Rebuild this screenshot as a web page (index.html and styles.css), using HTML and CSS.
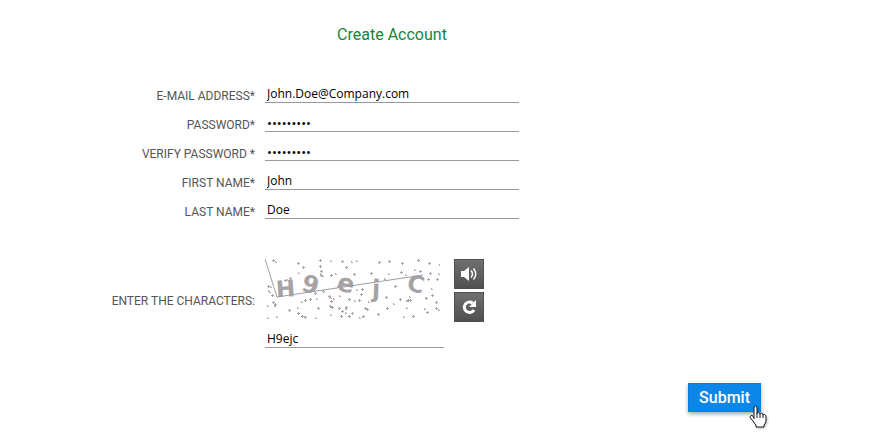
FILE: index.html
```html
<!DOCTYPE html>
<html lang="en">
<head>
<meta charset="utf-8">
<meta name="viewport" content="width=device-width, initial-scale=1">
<title>Create Account</title>
<link rel="stylesheet" href="styles.css">
</head>
<body>
<form class="account">
  <h1 class="title">Create Account</h1>
  <div class="fields">
    <div class="row"><label for="email">E-MAIL ADDRESS*</label><input id="email" type="text" value="John.Doe@Company.com"></div>
    <div class="row"><label for="pass">PASSWORD*</label><input id="pass" type="password" value="secret123"></div>
    <div class="row"><label for="verify">VERIFY PASSWORD *</label><input id="verify" type="password" value="secret123"></div>
    <div class="row"><label for="first">FIRST NAME*</label><input id="first" type="text" value="John"></div>
    <div class="row"><label for="last">LAST NAME*</label><input id="last" type="text" value="Doe"></div>
  </div>
  <div class="row captcha-row">
    <label for="chars">ENTER THE CHARACTERS:</label>
    <div class="captcha">
      <div class="challenge">
        <svg class="puzzle" width="175" height="60" viewBox="0 0 175 60" role="img" aria-label="Captcha">
          <defs>
            <marker id="speck" markerUnits="userSpaceOnUse" markerWidth="6" markerHeight="6" refX="2" refY="2">
              <path d="M1 2h3v1h-3zM2 1h1v3h-1z" fill="#aca6ac"/>
            </marker>
            <marker id="dot" markerUnits="userSpaceOnUse" markerWidth="6" markerHeight="6" refX="2" refY="2">
              <path d="M2 2h1v1h1v1h-2z" fill="#bda9bd"/>
            </marker>
          </defs>
          <path class="specks" d="M8 1L33 4L38 8L20 21L25 19L55 1L55 7L56 12L56 16L66 16L77 2L81 8L3 27L7 36L8 43L10 45L24 51L40 41L45 40L33 54L37 57L40 58L53 49L58 32L64 37L65 47L67 48L73 27L74 49L77 52L76 57L84 40L84 57L114 3L124 2L137 4L153 1L164 4L106 14L89 15L136 13L155 12L165 14L163 20L172 20L130 27L97 30L96 35L94 41L121 38L122 49L135 40L145 41L143 41L161 39L167 36L171 43L171 49L162 53L148 57L113 55L100 49L102 50L87 54L98 57L66 42L81 48L50 34"/>
          <path class="dots" d="M10 2L33 13L65 1L70 14L3 31L5 27L2 46L2 58L11 57L36 42L32 48L50 58L51 39L65 55L68 39L74 36L80 49L119 19L123 14L140 15L149 10L173 14L174 5L166 29L91 30L89 41L128 44L144 37L173 50L159 49L138 57L141 48L94 58L103 42L91 1L86 2L49 28L39 57L57 16L55 14L22 20L9 46L4 32L65 38L80 53L97 57L160 38L141 41"/>
          <g class="letters">
            <text x="11" y="38" font-size="23" transform="rotate(-4 20 30)">H</text>
            <text x="37" y="34" font-size="24" transform="rotate(14 46 27)">9</text>
            <text x="72" y="33" font-size="25" transform="rotate(12 81 27)">e</text>
            <text x="107" y="38" font-size="24" transform="rotate(2 111 34)">j</text>
            <text x="142" y="33" font-size="23" transform="rotate(12 150 27)">C</text>
          </g>
          <path d="M0 0L12 38L158 16" fill="none" stroke="#a39da3"/>
        </svg>
        <div class="tools">
          <button class="tool" type="button" aria-label="Play audio">
            <svg width="20" height="16" viewBox="0 0 20 16"><path d="M2 5h3l5-4v14l-5-4H2z" fill="#fff"/><path d="M12 4.500q3 3.500 0 7M14.500 2.500q4.500 5.500 0 11" fill="none" stroke="#fff" stroke-width="1.500"/></svg>
          </button>
          <button class="tool" type="button" aria-label="New characters">
            <svg width="16" height="16" viewBox="0 0 16 16"><path d="M13 11A5.200 5.200 0 1 1 11.800 4.200" fill="none" stroke="#fff" stroke-width="3"/><path d="M15 1v7H8z" fill="#fff"/></svg>
          </button>
        </div>
      </div>
      <input id="chars" type="text" value="H9ejc">
    </div>
  </div>
  <div class="actions">
    <button class="submit" type="submit">Submit</button>
    <svg class="pointer" width="20" height="25" viewBox="0 0 20 25" aria-hidden="true"><path d="M5 14V3Q5 1 6.500 1T8 3V9Q8 7.500 9.500 7.500T11 9.500Q11 8 12.500 8T14 10.500Q14 9 15.500 9.500T17 12V16Q17 18 15 20V22H7V20Q5 18 4 16L1.500 13Q.5 11.500 2 10.500T5 13" fill="#fff" stroke="#111827"/><path d="M8 9v4M11 9.500V13M14 10.500V13" stroke="#111827"/></svg>
  </div>
</form>
</body>
</html>
```
FILE: styles.css
```css
* {
  box-sizing: border-box;
}

body {
  margin: 0;
  background: #fff;
  color: #555;
  font: 12px/16px Roboto, sans-serif;
}

.account {
  padding: 25px 111px 24px 0;
}

.title {
  width: 254px;
  margin: 0 0 38px 265px;
  color: #1b8239;
  font-size: 16px;
  font-weight: 400;
  line-height: 20px;
  text-align: center;
}

.fields {
  display: grid;
  gap: 9px;
}

.row {
  display: grid;
  grid-template-columns: 255px 254px;
  column-gap: 10px;
  align-items: center;
}

label {
  text-align: right;
  white-space: nowrap;
}

.fields label {
  padding-top: 6px;
  line-height: 14px;
}

input {
  width: 100%;
  height: 20px;
  padding: 2px 2px 0;
  border: 0;
  border-bottom: 1px solid #999;
  background: transparent;
  color: #000;
  font: 12px/16px "Open Sans", sans-serif;
  outline: 0;
}

input[type="password"] {
  font-size: 13px;
}

.captcha-row {
  margin-top: 40px;
}

.captcha-row label {
  padding-bottom: 6px;
}

.captcha {
  display: grid;
  gap: 6px;
}

.captcha input {
  width: 179px;
}

.challenge {
  display: flex;
  gap: 14px;
}

.tools {
  display: grid;
  gap: 3px;
}

.tool {
  display: grid;
  place-items: center;
  width: 30px;
  height: 30px;
  padding: 0;
  border: 1px solid #505050;
  background: linear-gradient(#707070, #505050);
}

.specks {
  fill: none;
  marker: url(#speck);
}

.dots {
  fill: none;
  marker: url(#dot);
}

.letters {
  fill: #a5a3a5;
  font-family: "DejaVu Sans", sans-serif;
  font-weight: 700;
}

.actions {
  position: relative;
  display: flex;
  justify-content: flex-end;
  margin-top: 35px;
}

.submit {
  height: 29px;
  padding: 0 10px;
  border: 1px solid #0b7ddd;
  background: #0d86ea;
  box-shadow: 0 2px 4px rgb(0 0 0 / 35%);
  color: #fff;
  font: 500 16px/20px Roboto, sans-serif;
}

.pointer {
  position: absolute;
  top: 22px;
  right: -8px;
  filter: drop-shadow(1px 1px 1px rgb(0 0 0 / 25%));
}
```
